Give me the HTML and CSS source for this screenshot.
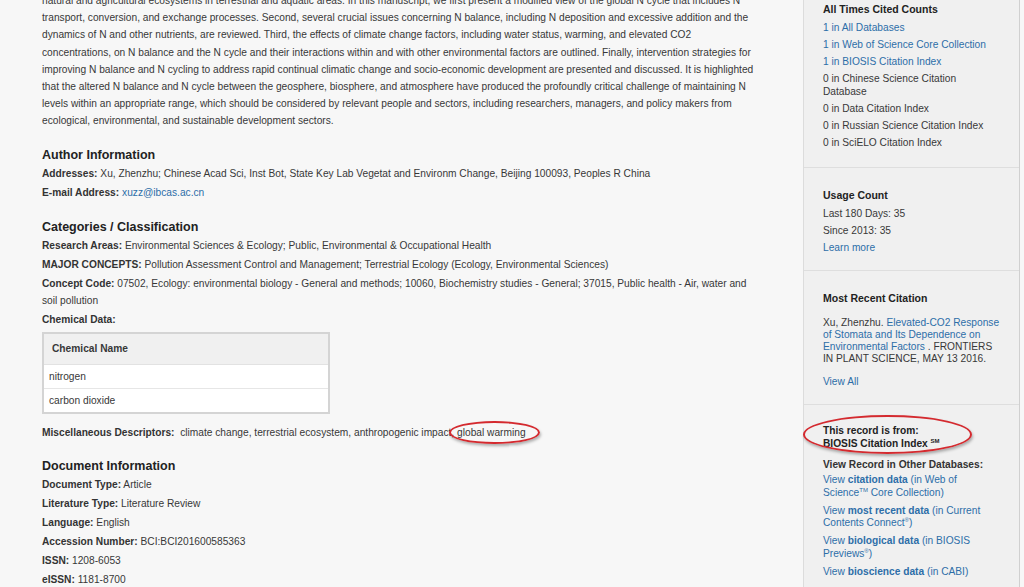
FILE: index.html
```html
<!DOCTYPE html>
<html lang="en">
<head>
    <meta charset="UTF-8">
    <meta name="viewport" content="width=device-width, initial-scale=1.0">
    <title>Full Record</title>
    <link rel="stylesheet" href="styles.css">
</head>
<body>
    <div class="page">
        <div class="record">
            <p class="abstract">natural and agricultural ecosystems in terrestrial and aquatic areas. In this manuscript, we first present a modified view of the global N cycle that includes N transport, conversion, and exchange processes. Second, several crucial issues concerning N balance, including N deposition and excessive addition and the dynamics of N and other nutrients, are reviewed. Third, the effects of climate change factors, including water status, warming, and elevated CO2 concentrations, on N balance and the N cycle and their interactions within and with other environmental factors are outlined. Finally, intervention strategies for improving N balance and N cycling to address rapid continual climatic change and socio-economic development are presented and discussed. It is highlighted that the altered N balance and N cycle between the geosphere, biosphere, and atmosphere have produced the profoundly critical challenge of maintaining N levels within an appropriate range, which should be considered by relevant people and sectors, including researchers, managers, and policy makers from ecological, environmental, and sustainable development sectors.</p>

            <div class="block">
                <h3>Author Information</h3>
                <p class="field"><b>Addresses:</b> Xu, Zhenzhu; Chinese Acad Sci, Inst Bot, State Key Lab Vegetat and Environm Change, Beijing 100093, Peoples R China</p>
                <p class="field"><b>E-mail Address:</b> <a href="#">xuzz@ibcas.ac.cn</a></p>
            </div>

            <div class="block">
                <h3>Categories / Classification</h3>
                <p class="field"><b>Research Areas:</b> Environmental Sciences &amp; Ecology; Public, Environmental &amp; Occupational Health</p>
                <p class="field"><b>MAJOR CONCEPTS:</b> Pollution Assessment Control and Management; Terrestrial Ecology (Ecology, Environmental Sciences)</p>
                <p class="field"><b>Concept Code:</b> 07502, Ecology: environmental biology - General and methods; 10060, Biochemistry studies - General; 37015, Public health - Air, water and soil pollution</p>
                <p class="field"><b>Chemical Data:</b></p>
                <table class="chem">
                    <tr><th>Chemical Name</th></tr>
                    <tr><td>nitrogen</td></tr>
                    <tr><td>carbon dioxide</td></tr>
                </table>
                <p class="field"><b>Miscellaneous Descriptors:</b>&nbsp; climate change, terrestrial ecosystem, anthropogenic impact, <span class="circled warming">global warming</span></p>
            </div>

            <div class="block last-block">
                <h3>Document Information</h3>
                <p class="field"><b>Document Type:</b> Article</p>
                <p class="field"><b>Literature Type:</b> Literature Review</p>
                <p class="field"><b>Language:</b> English</p>
                <p class="field"><b>Accession Number:</b> BCI:BCI201600585363</p>
                <p class="field"><b>ISSN:</b> 1208-6053</p>
                <p class="field"><b>eISSN:</b> 1181-8700</p>
            </div>
        </div>

        <div class="sidebar">
            <div class="box first">
                <h4>All Times Cited Counts</h4>
                <a href="#">1 in All Databases</a>
                <a href="#">1 in Web of Science Core Collection</a>
                <a href="#">1 in BIOSIS Citation Index</a>
                <span>0 in Chinese Science Citation Database</span>
                <span>0 in Data Citation Index</span>
                <span>0 in Russian Science Citation Index</span>
                <span>0 in SciELO Citation Index</span>
            </div>
            <div class="box">
                <h4>Usage Count</h4>
                <span>Last 180 Days: 35</span>
                <span>Since 2013: 35</span>
                <a href="#">Learn more</a>
            </div>
            <div class="box">
                <h4>Most Recent Citation</h4>
                <p class="cite">Xu, Zhenzhu. <a href="#">Elevated-CO2 Response of Stomata and Its Dependence on Environmental Factors</a> . FRONTIERS IN PLANT SCIENCE, MAY 13 2016.</p>
                <a href="#">View All</a>
            </div>
            <div class="box last">
                <p class="source circled">This record is from:<br>BIOSIS Citation Index <sup>SM</sup></p>
                <h5>View Record in Other Databases:</h5>
                <a class="other" href="#">View <b>citation data</b> (in Web of Science<sup>TM</sup> Core Collection)</a>
                <a class="other" href="#">View <b>most recent data</b> (in Current Contents Connect<sup>&reg;</sup>)</a>
                <a class="other" href="#">View <b>biological data</b> (in BIOSIS Previews<sup>&reg;</sup>)</a>
                <a class="other" href="#">View <b>bioscience data</b> (in CABI)</a>
            </div>
        </div>
    </div>
</body>
</html>
```

FILE: styles.css
```css
body {
    font-family: Arial, "Liberation Sans", sans-serif;
    font-size: 10.2px;
    color: #383838;
    margin: 0;
    background-color: #f7f7f7;
}

a {
    color: #2d6ea8;
    text-decoration: none;
}

sup {
    line-height: 0;
    font-size: 6px;
}

.page {
    display: flex;
    align-items: flex-start;
}

.record {
    width: 720px;
    padding-left: 42px;
    margin-right: 41px;
}

.abstract {
    margin: -8px 0 -1px;
    line-height: 17.2px;
}

.block {
    margin-top: 19px;
}

.block.last-block {
    margin-top: 18px;
}

.block h3 {
    font-size: 12.5px;
    line-height: 15px;
    margin: 0 0 2px;
    color: #222;
}

.field {
    margin: 0 0 2px;
    line-height: 17px;
}

.field b {
    color: #333;
}

.chem {
    border-collapse: collapse;
    border: 2px solid #d4d4d4;
    width: 288px;
    margin: 4px 0 10px;
}

.chem th {
    text-align: left;
    background-color: #f0f0f0;
    height: 30px;
    padding: 0 8px;
    border-bottom: 1px solid #e2e2e2;
}

.chem td {
    background-color: #fff;
    height: 23px;
    padding: 0 5px;
    border-top: 1px solid #e6e6e6;
}

.circled {
    position: relative;
}

.circled::after {
    content: "";
    position: absolute;
    border: 2px solid #d42a2f;
    border-radius: 50%;
    box-shadow: 1px 2px 3px rgba(0,0,0,0.3);
}

.warming::after {
    left: -8px;
    right: -14px;
    top: -6px;
    bottom: -6px;
}

.sidebar {
    width: 215px;
    background-color: #f0f0f0;
    border-left: 1px solid #dcdcdc;
    border-right: 1px solid #d0d0d0;
}

.box {
    width: 174px;
    padding: 20px 22px 16px 19px;
    border-bottom: 1px solid #dedede;
    display: flex;
    flex-direction: column;
    line-height: 13px;
    gap: 4px;
}

.box.first {
    padding-top: 2px;
    padding-bottom: 18px;
}

.box.last {
    border-bottom: none;
    padding-top: 19px;
    padding-bottom: 20px;
    gap: 5.5px;
}

.box h4 {
    font-size: 10.5px;
    margin: 0 0 1px;
    line-height: 14px;
    color: #222;
}

.cite {
    margin: 7px -6px 6px 0;
    line-height: 12px;
}

.source {
    align-self: flex-start;
    margin: 0 0 1px;
    font-weight: bold;
    line-height: 13px;
    color: #222;
}

.source::after {
    left: -20px;
    right: -32px;
    top: -9px;
    bottom: -4px;
}

.box h5 {
    font-size: 10.2px;
    line-height: 12px;
    margin: 2px 0 -2px;
    color: #333;
}

.other {
    line-height: 12.5px;
}
```
